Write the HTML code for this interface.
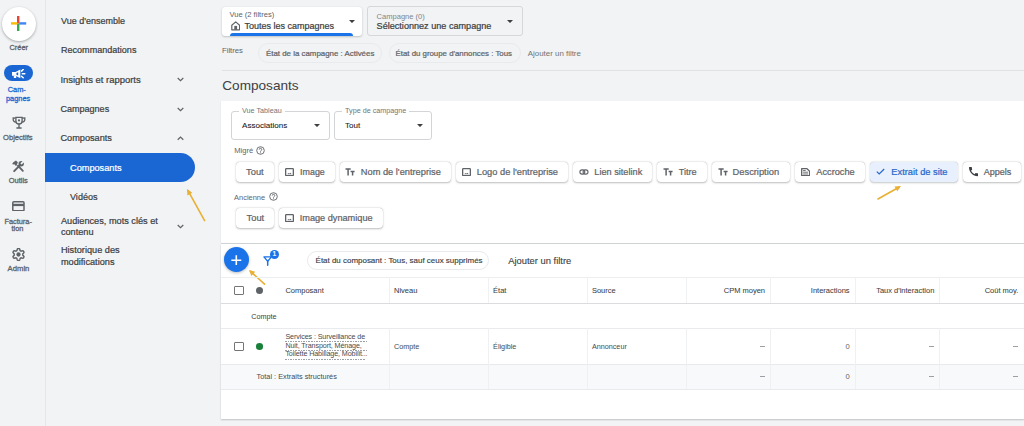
<!DOCTYPE html>
<html><head><meta charset="utf-8"><style>
html,body{margin:0;padding:0;background:#f1f3f4}
body{width:1024px;height:426px;overflow:hidden;position:relative;background:#f1f3f4;font-family:"Liberation Sans",sans-serif}
.a{position:absolute}
.t{position:absolute;white-space:nowrap}
</style></head><body>
<div class="a" style="left:45px;top:0px;width:1px;height:426px;background:#e4e6e8"></div>
<div class="a" style="left:1.5px;top:6.8px;width:34px;height:34px;border-radius:50%;background:#fff;box-shadow:0 1px 3px rgba(60,64,67,.3),0 1px 2px rgba(60,64,67,.15)"></div>
<svg class="a" style="left:10px;top:15px" width="17" height="17" viewBox="0 0 17 17"><rect x="7" y="1" width="2.4" height="7.5" fill="#ea4335"/><rect x="9.2" y="7.2" width="7" height="2.4" fill="#4285f4"/><rect x="7" y="8.6" width="2.4" height="7.4" fill="#34a853"/><rect x="1" y="7.2" width="6.4" height="2.4" fill="#fbbc04"/></svg>
<div class="t" style="left:9.50px;top:43.74px;font-size:7.40px;line-height:7.40px;color:#5f6368;-webkit-text-stroke:0.3px #5f6368;">Créer</div>
<div class="a" style="left:4px;top:65px;width:29px;height:15.5px;border-radius:8px;background:#1a66d2"></div>
<svg class="a" style="left:12px;top:69px" width="14" height="10" viewBox="0 0 14 10"><path d="M0 2.9h3.6L8.3 0.5v8.7L3.6 6.7H0z" fill="#fff"/><path d="M4.4 3.9L6.2 3.3v3.1L4.4 5.8z" fill="#1a66d2"/><path d="M1.7 6.5h2.5L4.2 9H1.9z" fill="#fff"/><path d="M9.5 2.1l1.7-1.6M10.3 4.7h2.5M9.5 7.2l1.7 1.6" stroke="#fff" stroke-width="1.5" stroke-linecap="round"/></svg>
<div class="t" style="left:7.70px;top:85.74px;font-size:7.40px;line-height:7.40px;color:#1a66d2;-webkit-text-stroke:0.3px #1a66d2;">Cam-</div>
<div class="t" style="left:6.00px;top:95.04px;font-size:7.40px;line-height:7.40px;color:#1a66d2;-webkit-text-stroke:0.3px #1a66d2;">pagnes</div>
<svg class="a" style="left:11.5px;top:115.5px" width="14" height="13.5" viewBox="0 0 14 13.5"><path d="M3.9 1.3h6.2v3.6a3.1 3.1 0 0 1-6.2 0z" fill="none" stroke="#5f6368" stroke-width="1.35"/><path d="M3.8 2.2L1.2 1.9v1.5c0 1.3 1.1 2.5 2.8 2.7M10.2 2.2l2.6-.3v1.5c0 1.3-1.1 2.5-2.8 2.7" fill="none" stroke="#5f6368" stroke-width="1.3"/><path d="M7 8v3.4M4.4 12h5.2" stroke="#5f6368" stroke-width="1.35"/><circle cx="7" cy="4.4" r="1.1" fill="#5f6368"/></svg>
<div class="t" style="left:3.00px;top:133.77px;font-size:7.60px;line-height:7.60px;color:#5f6368;-webkit-text-stroke:0.3px #5f6368;">Objectifs</div>
<svg class="a" style="left:12px;top:159.5px" width="13" height="13" viewBox="0 0 24 24"><path d="M4 20.5L14.5 10" stroke="#5f6368" stroke-width="3.6" stroke-linecap="round"/><circle cx="17" cy="7" r="5" fill="#5f6368"/><path d="M17.6 6.4L22 2" stroke="#f1f3f4" stroke-width="3.4" stroke-linecap="round"/><path d="M11 10.5L20 20" stroke="#5f6368" stroke-width="3.4" stroke-linecap="round"/><path d="M10.8 4.2L7.3 0.7 3 3.5 0.6 6.6 1.8 8.6 3.7 7.6 7.8 11.6z" fill="#5f6368"/></svg>
<div class="t" style="left:8.70px;top:177.45px;font-size:7.50px;line-height:7.50px;color:#5f6368;-webkit-text-stroke:0.3px #5f6368;">Outils</div>
<svg class="a" style="left:12px;top:200.5px" width="13" height="10.5" viewBox="0 0 13 10.5"><rect x="0.8" y="0.8" width="11.2" height="8.9" rx="1" fill="none" stroke="#5f6368" stroke-width="1.5"/><rect x="0.8" y="2.8" width="11.2" height="2.3" fill="#5f6368"/></svg>
<div class="t" style="left:4.40px;top:217.64px;font-size:7.40px;line-height:7.40px;color:#5f6368;-webkit-text-stroke:0.3px #5f6368;">Factura-</div>
<div class="t" style="left:11.50px;top:225.34px;font-size:7.40px;line-height:7.40px;color:#5f6368;-webkit-text-stroke:0.3px #5f6368;">tion</div>
<svg class="a" style="left:11.8px;top:247.5px" width="13" height="13" viewBox="0 0 12.8 12.8"><path d="M10.55 6.40 L10.55 6.51 L10.54 6.62 L10.54 6.73 L10.53 6.83 L10.51 6.94 L10.60 7.06 L10.75 7.21 L10.91 7.36 L11.07 7.52 L11.23 7.69 L11.39 7.88 L11.53 8.07 L11.66 8.26 L11.77 8.46 L11.80 8.64 L11.74 8.78 L11.68 8.92 L11.61 9.06 L11.54 9.19 L11.47 9.32 L11.39 9.46 L11.31 9.59 L11.22 9.71 L11.13 9.84 L11.04 9.96 L10.87 10.02 L10.64 10.02 L10.41 10.01 L10.17 9.98 L9.94 9.94 L9.70 9.88 L9.48 9.82 L9.27 9.76 L9.07 9.70 L8.93 9.69 L8.84 9.76 L8.75 9.82 L8.66 9.88 L8.57 9.94 L8.48 9.99 L8.38 10.05 L8.28 10.10 L8.19 10.15 L8.09 10.19 L7.99 10.23 L7.92 10.37 L7.88 10.57 L7.82 10.78 L7.76 11.00 L7.69 11.23 L7.61 11.46 L7.52 11.68 L7.42 11.89 L7.30 12.08 L7.16 12.20 L7.01 12.22 L6.86 12.23 L6.71 12.24 L6.55 12.25 L6.40 12.25 L6.25 12.25 L6.09 12.24 L5.94 12.23 L5.79 12.22 L5.64 12.20 L5.50 12.08 L5.38 11.89 L5.28 11.68 L5.19 11.46 L5.11 11.23 L5.04 11.00 L4.98 10.78 L4.92 10.57 L4.88 10.37 L4.81 10.23 L4.71 10.19 L4.61 10.15 L4.52 10.10 L4.42 10.05 L4.33 9.99 L4.23 9.94 L4.14 9.88 L4.05 9.82 L3.96 9.76 L3.87 9.69 L3.73 9.70 L3.53 9.76 L3.32 9.82 L3.10 9.88 L2.86 9.94 L2.63 9.98 L2.39 10.01 L2.16 10.02 L1.93 10.02 L1.76 9.96 L1.67 9.84 L1.58 9.71 L1.49 9.59 L1.41 9.46 L1.33 9.32 L1.26 9.19 L1.19 9.06 L1.12 8.92 L1.06 8.78 L1.00 8.64 L1.03 8.46 L1.14 8.26 L1.27 8.07 L1.41 7.88 L1.57 7.69 L1.73 7.52 L1.89 7.36 L2.05 7.21 L2.20 7.06 L2.29 6.94 L2.27 6.83 L2.26 6.73 L2.26 6.62 L2.25 6.51 L2.25 6.40 L2.25 6.29 L2.26 6.18 L2.26 6.07 L2.27 5.97 L2.29 5.86 L2.20 5.74 L2.05 5.59 L1.89 5.44 L1.73 5.28 L1.57 5.11 L1.41 4.92 L1.27 4.73 L1.14 4.54 L1.03 4.34 L1.00 4.16 L1.06 4.02 L1.12 3.88 L1.19 3.74 L1.26 3.61 L1.33 3.48 L1.41 3.34 L1.49 3.21 L1.58 3.09 L1.67 2.96 L1.76 2.84 L1.93 2.78 L2.16 2.78 L2.39 2.79 L2.63 2.82 L2.86 2.86 L3.10 2.92 L3.32 2.98 L3.53 3.04 L3.73 3.10 L3.87 3.11 L3.96 3.04 L4.05 2.98 L4.14 2.92 L4.23 2.86 L4.32 2.81 L4.42 2.75 L4.52 2.70 L4.61 2.65 L4.71 2.61 L4.81 2.57 L4.88 2.43 L4.92 2.23 L4.98 2.02 L5.04 1.80 L5.11 1.57 L5.19 1.34 L5.28 1.12 L5.38 0.91 L5.50 0.72 L5.64 0.60 L5.79 0.58 L5.94 0.57 L6.09 0.56 L6.25 0.55 L6.40 0.55 L6.55 0.55 L6.71 0.56 L6.86 0.57 L7.01 0.58 L7.16 0.60 L7.30 0.72 L7.42 0.91 L7.52 1.12 L7.61 1.34 L7.69 1.57 L7.76 1.80 L7.82 2.02 L7.88 2.23 L7.92 2.43 L7.99 2.57 L8.09 2.61 L8.19 2.65 L8.28 2.70 L8.38 2.75 L8.48 2.81 L8.57 2.86 L8.66 2.92 L8.75 2.98 L8.84 3.04 L8.93 3.11 L9.07 3.10 L9.27 3.04 L9.48 2.98 L9.70 2.92 L9.94 2.86 L10.17 2.82 L10.41 2.79 L10.64 2.78 L10.87 2.78 L11.04 2.84 L11.13 2.96 L11.22 3.09 L11.31 3.21 L11.39 3.34 L11.47 3.48 L11.54 3.61 L11.61 3.74 L11.68 3.88 L11.74 4.02 L11.80 4.16 L11.77 4.34 L11.66 4.54 L11.53 4.73 L11.39 4.92 L11.23 5.11 L11.07 5.28 L10.91 5.44 L10.75 5.59 L10.60 5.74 L10.51 5.86 L10.53 5.97 L10.54 6.07 L10.54 6.18 L10.55 6.29 L10.55 6.40z" fill="none" stroke="#5f6368" stroke-width="1.45" stroke-linejoin="round"/><circle cx="6.4" cy="6.4" r="2.1" fill="#5f6368"/></svg>
<div class="t" style="left:7.60px;top:265.18px;font-size:7.70px;line-height:7.70px;color:#5f6368;-webkit-text-stroke:0.3px #5f6368;">Admin</div>
<div class="t" style="left:61.00px;top:16.98px;font-size:9.00px;line-height:9.00px;color:#3c4043;-webkit-text-stroke:0.22px #3c4043;">Vue d'ensemble</div>
<div class="t" style="left:61.00px;top:46.14px;font-size:9.05px;line-height:9.05px;color:#3c4043;-webkit-text-stroke:0.22px #3c4043;">Recommandations</div>
<div class="t" style="left:60.40px;top:75.40px;font-size:9.45px;line-height:9.45px;color:#3c4043;-webkit-text-stroke:0.22px #3c4043;">Insights et rapports</div>
<svg class="a" style="left:177px;top:77px" width="7" height="5" viewBox="0 0 7 5"><path d="M0.7 1L3.5 3.7 6.3 1" fill="none" stroke="#5f6368" stroke-width="1.2"/></svg>
<div class="t" style="left:60.40px;top:105.04px;font-size:9.05px;line-height:9.05px;color:#3c4043;-webkit-text-stroke:0.22px #3c4043;">Campagnes</div>
<svg class="a" style="left:177px;top:106.5px" width="7" height="5" viewBox="0 0 7 5"><path d="M0.7 1L3.5 3.7 6.3 1" fill="none" stroke="#5f6368" stroke-width="1.2"/></svg>
<div class="t" style="left:60.40px;top:134.41px;font-size:9.20px;line-height:9.20px;color:#3c4043;-webkit-text-stroke:0.22px #3c4043;">Composants</div>
<svg class="a" style="left:177px;top:135.5px" width="7" height="5" viewBox="0 0 7 5"><path d="M0.7 3.7L3.5 1 6.3 3.7" fill="none" stroke="#5f6368" stroke-width="1.2"/></svg>
<div class="a" style="left:45px;top:153px;width:150px;height:29.3px;background:#1a67d4;border-radius:0 14.6px 14.6px 0"></div>
<div class="t" style="left:70.00px;top:163.71px;font-size:9.20px;line-height:9.20px;color:#fff;-webkit-text-stroke:0.22px #fff;">Composants</div>
<div class="t" style="left:70.00px;top:193.24px;font-size:9.05px;line-height:9.05px;color:#3c4043;-webkit-text-stroke:0.22px #3c4043;">Vidéos</div>
<div class="t" style="left:60.90px;top:216.51px;font-size:9.20px;line-height:9.20px;color:#3c4043;-webkit-text-stroke:0.22px #3c4043;">Audiences, mots clés et</div>
<div class="t" style="left:60.90px;top:228.21px;font-size:9.20px;line-height:9.20px;color:#3c4043;-webkit-text-stroke:0.22px #3c4043;">contenu</div>
<svg class="a" style="left:177px;top:224px" width="7" height="5" viewBox="0 0 7 5"><path d="M0.7 1L3.5 3.7 6.3 1" fill="none" stroke="#5f6368" stroke-width="1.2"/></svg>
<div class="t" style="left:60.90px;top:245.81px;font-size:9.20px;line-height:9.20px;color:#3c4043;-webkit-text-stroke:0.22px #3c4043;">Historique des</div>
<div class="t" style="left:60.90px;top:257.51px;font-size:9.20px;line-height:9.20px;color:#3c4043;-webkit-text-stroke:0.22px #3c4043;">modifications</div>
<svg class="a" style="left:179.3px;top:181.4px" width="33.6" height="47.6"><line x1="25.6" y1="39.6" x2="9.0" y2="9.7" stroke="#e8b034" stroke-width="1.6" stroke-linecap="round"/><path d="M8.0 8.0L13.3 11.7L8.4 14.5z" fill="#e8b034"/></svg>
<div class="a" style="left:222px;top:7px;width:140px;height:29px;background:#fff;border-radius:3px;box-shadow:0 1px 2px rgba(60,64,67,.25),0 0 1px rgba(60,64,67,.15)"></div>
<div class="t" style="left:229.40px;top:11.07px;font-size:7.60px;line-height:7.60px;color:#5f6368;">Vue (2 filtres)</div>
<svg class="a" style="left:230.8px;top:21.3px" width="9.4" height="9.6" viewBox="0 0 9.4 9.6"><path d="M0.8 4.2L4.7 0.9l3.9 3.3v4.6H0.8z" fill="none" stroke="#5f6368" stroke-width="1.2" stroke-linejoin="round"/><rect x="3.3" y="4.9" width="2.8" height="3.9" fill="#5f6368"/></svg>
<div class="t" style="left:244.40px;top:21.78px;font-size:9.00px;line-height:9.00px;color:#3c4043;-webkit-text-stroke:0.22px #3c4043;">Toutes les campagnes</div>
<svg class="a" style="left:349px;top:19.6px" width="6" height="3.2" viewBox="0 0 6 3.2"><path d="M0 0h6L3 3.1z" fill="#3c4043"/></svg>
<div class="a" style="left:229.8px;top:33px;width:123px;height:3px;background:#1a73e8;border-radius:3px 3px 0 0"></div>
<div class="a" style="left:366.5px;top:6.3px;width:156px;height:29.4px;border:1px solid #d5d7da;border-radius:3px;box-sizing:border-box"></div>
<div class="t" style="left:376.60px;top:12.51px;font-size:7.55px;line-height:7.55px;color:#80868b;">Campagne (0)</div>
<div class="t" style="left:376.60px;top:22.10px;font-size:9.10px;line-height:9.10px;color:#3c4043;-webkit-text-stroke:0.22px #3c4043;">Sélectionnez une campagne</div>
<svg class="a" style="left:506.8px;top:20px" width="6" height="3.2" viewBox="0 0 6 3.2"><path d="M0 0h6L3 3.1z" fill="#3c4043"/></svg>
<div class="t" style="left:222.00px;top:47.28px;font-size:7.70px;line-height:7.70px;color:#5f6368;">Filtres</div>
<div class="a" style="left:258px;top:43.3px;width:124px;height:19.3px;border:1px solid #e8eaed;border-radius:10px;box-sizing:border-box"></div>
<div class="t" style="left:266.00px;top:50.01px;font-size:7.90px;line-height:7.90px;color:#5f6368;-webkit-text-stroke:0.22px #5f6368;">État de la campagne : Activées</div>
<div class="a" style="left:388.6px;top:42.7px;width:132px;height:20px;border:1px solid #e8eaed;border-radius:10px;box-sizing:border-box"></div>
<div class="t" style="left:395.50px;top:50.05px;font-size:7.85px;line-height:7.85px;color:#5f6368;-webkit-text-stroke:0.22px #5f6368;">État du groupe d'annonces : Tous</div>
<div class="t" style="left:527.80px;top:49.91px;font-size:7.90px;line-height:7.90px;color:#6f7377;">Ajouter un filtre</div>
<div class="a" style="left:222px;top:70px;width:802px;height:1px;background:#dfe1e5"></div>
<div class="t" style="left:222.30px;top:78.99px;font-size:13.60px;line-height:13.60px;color:#3c4043;">Composants</div>
<div class="a" style="left:221px;top:101px;width:803px;height:142px;background:#fff;box-shadow:0 1px 1px rgba(60,64,67,.18)"></div>
<div class="a" style="left:231px;top:110.6px;width:98.5px;height:29.4px;border:1px solid #d2d4d7;border-radius:3px;box-sizing:border-box"></div><div class="a" style="left:239.1px;top:108.6px;width:45.8px;height:4px;background:#fff"></div><div class="t" style="left:242.10px;top:106.81px;font-size:7.20px;line-height:7.20px;color:#70757a;">Vue Tableau</div><div class="t" style="left:242.10px;top:121.89px;font-size:8.05px;line-height:8.05px;color:#202124;-webkit-text-stroke:0.08px #202124;">Associations</div><svg class="a" style="left:313.8px;top:124.2px" width="6" height="3.2" viewBox="0 0 6 3.2"><path d="M0 0h6L3 3.1z" fill="#3c4043"/></svg>
<div class="a" style="left:334px;top:110.6px;width:97.5px;height:29.4px;border:1px solid #d2d4d7;border-radius:3px;box-sizing:border-box"></div><div class="a" style="left:342.1px;top:108.6px;width:67.1px;height:4px;background:#fff"></div><div class="t" style="left:345.10px;top:106.81px;font-size:7.20px;line-height:7.20px;color:#70757a;">Type de campagne</div><div class="t" style="left:345.10px;top:121.93px;font-size:8.00px;line-height:8.00px;color:#202124;-webkit-text-stroke:0.08px #202124;">Tout</div><svg class="a" style="left:416.8px;top:124.2px" width="6" height="3.2" viewBox="0 0 6 3.2"><path d="M0 0h6L3 3.1z" fill="#3c4043"/></svg>
<div class="t" style="left:234.20px;top:147.07px;font-size:7.60px;line-height:7.60px;color:#5f6368;">Migré</div>
<svg class="a" style="left:256.2px;top:145.6px" width="9" height="9" viewBox="0 0 9 9"><circle cx="4.5" cy="4.5" r="3.8" fill="none" stroke="#5f6368" stroke-width="0.9"/><path d="M3.2 3.6a1.3 1.3 0 1 1 1.9 1.1c-.5.3-.6.5-.6 1" fill="none" stroke="#5f6368" stroke-width="0.9"/><circle cx="4.5" cy="6.8" r=".5" fill="#5f6368"/></svg>
<div class="t" style="left:234.10px;top:193.69px;font-size:7.45px;line-height:7.45px;color:#5f6368;">Ancienne</div>
<svg class="a" style="left:268.6px;top:192.4px" width="9" height="9" viewBox="0 0 9 9"><circle cx="4.5" cy="4.5" r="3.8" fill="none" stroke="#5f6368" stroke-width="0.9"/><path d="M3.2 3.6a1.3 1.3 0 1 1 1.9 1.1c-.5.3-.6.5-.6 1" fill="none" stroke="#5f6368" stroke-width="0.9"/><circle cx="4.5" cy="6.8" r=".5" fill="#5f6368"/></svg>
<div class="a" style="left:235.6px;top:162.3px;width:38.7px;height:19.5px;background:#fff;border-radius:4px;box-shadow:0 0.5px 2px rgba(60,64,67,.35),0 0 0.5px rgba(60,64,67,.3)"></div>
<div class="t" style="left:246.10px;top:167.73px;font-size:9.30px;line-height:9.30px;color:#5f6368;-webkit-text-stroke:0.22px #5f6368;">Tout</div>
<div class="a" style="left:278.8px;top:162.3px;width:56.6px;height:19.5px;background:#fff;border-radius:4px;box-shadow:0 0.5px 2px rgba(60,64,67,.35),0 0 0.5px rgba(60,64,67,.3)"></div>
<svg class="a" style="left:285.2px;top:167.9px" width="9" height="8.4" viewBox="0 0 9 8.4"><rect x="0.65" y="0.65" width="7.7" height="7.1" rx="0.7" fill="none" stroke="#5f6368" stroke-width="1.3"/><path d="M2.2 6.2l1.2-1.3 0.9 0.9 1-1.1 1.5 1.5z" fill="#5f6368"/></svg>
<div class="t" style="left:300.10px;top:168.07px;font-size:8.90px;line-height:8.90px;color:#5f6368;-webkit-text-stroke:0.22px #5f6368;">Image</div>
<div class="a" style="left:339.7px;top:162.3px;width:111.3px;height:19.5px;background:#fff;border-radius:4px;box-shadow:0 0.5px 2px rgba(60,64,67,.35),0 0 0.5px rgba(60,64,67,.3)"></div>
<svg class="a" style="left:345.3px;top:168px" width="10" height="8" viewBox="0 0 10 8"><path d="M0.5 1.1h5.2M3.1 1.1v6.4M5.6 3.6h4M7.6 3.6v3.9" fill="none" stroke="#5f6368" stroke-width="1.5"/></svg>
<div class="t" style="left:360.80px;top:167.74px;font-size:9.28px;line-height:9.28px;color:#5f6368;-webkit-text-stroke:0.22px #5f6368;">Nom de l'entreprise</div>
<div class="a" style="left:455.7px;top:162.3px;width:112.5px;height:19.5px;background:#fff;border-radius:4px;box-shadow:0 0.5px 2px rgba(60,64,67,.35),0 0 0.5px rgba(60,64,67,.3)"></div>
<svg class="a" style="left:462.4px;top:167.9px" width="9" height="8.4" viewBox="0 0 9 8.4"><rect x="0.65" y="0.65" width="7.7" height="7.1" rx="0.7" fill="none" stroke="#5f6368" stroke-width="1.3"/><path d="M2.2 6.2l1.2-1.3 0.9 0.9 1-1.1 1.5 1.5z" fill="#5f6368"/></svg>
<div class="t" style="left:476.80px;top:167.74px;font-size:9.29px;line-height:9.29px;color:#5f6368;-webkit-text-stroke:0.22px #5f6368;">Logo de l'entreprise</div>
<div class="a" style="left:573.2px;top:162.3px;width:79.0px;height:19.5px;background:#fff;border-radius:4px;box-shadow:0 0.5px 2px rgba(60,64,67,.35),0 0 0.5px rgba(60,64,67,.3)"></div>
<svg class="a" style="left:578.8px;top:169px" width="10" height="6" viewBox="0 0 10 6"><rect x="0.9" y="0.9" width="4.9" height="4.2" rx="2.1" fill="none" stroke="#5f6368" stroke-width="1.1"/><rect x="4.1" y="0.9" width="4.9" height="4.2" rx="2.1" fill="none" stroke="#5f6368" stroke-width="1.1"/></svg>
<div class="t" style="left:594.30px;top:167.83px;font-size:9.18px;line-height:9.18px;color:#5f6368;-webkit-text-stroke:0.22px #5f6368;">Lien sitelink</div>
<div class="a" style="left:656.9px;top:162.3px;width:49.9px;height:19.5px;background:#fff;border-radius:4px;box-shadow:0 0.5px 2px rgba(60,64,67,.35),0 0 0.5px rgba(60,64,67,.3)"></div>
<svg class="a" style="left:662.8px;top:168px" width="10" height="8" viewBox="0 0 10 8"><path d="M0.5 1.1h5.2M3.1 1.1v6.4M5.6 3.6h4M7.6 3.6v3.9" fill="none" stroke="#5f6368" stroke-width="1.5"/></svg>
<div class="t" style="left:678.70px;top:167.83px;font-size:9.18px;line-height:9.18px;color:#5f6368;-webkit-text-stroke:0.22px #5f6368;">Titre</div>
<div class="a" style="left:711.5px;top:162.3px;width:78.5px;height:19.5px;background:#fff;border-radius:4px;box-shadow:0 0.5px 2px rgba(60,64,67,.35),0 0 0.5px rgba(60,64,67,.3)"></div>
<svg class="a" style="left:717.6px;top:168px" width="10" height="8" viewBox="0 0 10 8"><path d="M0.5 1.1h5.2M3.1 1.1v6.4M5.6 3.6h4M7.6 3.6v3.9" fill="none" stroke="#5f6368" stroke-width="1.5"/></svg>
<div class="t" style="left:732.60px;top:167.73px;font-size:9.30px;line-height:9.30px;color:#5f6368;-webkit-text-stroke:0.22px #5f6368;">Description</div>
<div class="a" style="left:795.2px;top:162.3px;width:69.7px;height:19.5px;background:#fff;border-radius:4px;box-shadow:0 0.5px 2px rgba(60,64,67,.35),0 0 0.5px rgba(60,64,67,.3)"></div>
<svg class="a" style="left:800.8px;top:167.8px" width="9.4" height="8.4" viewBox="0 0 9.4 8.4"><path d="M0.7 0.7h5.3l2.7 2.6v4.4H0.7z" fill="none" stroke="#5f6368" stroke-width="1.3" stroke-linejoin="round"/><path d="M2.1 2.5h2.6M2.1 4.2h5.1M2.1 6h5.1" stroke="#5f6368" stroke-width="0.9"/></svg>
<div class="t" style="left:816.30px;top:167.79px;font-size:9.23px;line-height:9.23px;color:#5f6368;-webkit-text-stroke:0.22px #5f6368;">Accroche</div>
<div class="a" style="left:870.2px;top:162.3px;width:87.7px;height:19.5px;background:#e8f0fe;border-radius:4px;box-shadow:0 0.5px 2px rgba(60,64,67,.3),0 0 0.5px rgba(60,64,67,.25)"></div>
<svg class="a" style="left:876.2px;top:168.3px" width="9" height="7" viewBox="0 0 9 7"><path d="M0.8 3.6l2.4 2.4L8.2 1" fill="none" stroke="#2767c9" stroke-width="1.2"/></svg>
<div class="t" style="left:891.30px;top:167.74px;font-size:9.29px;line-height:9.29px;color:#2767c9;-webkit-text-stroke:0.22px #2767c9;">Extrait de site</div>
<div class="a" style="left:962.6px;top:162.3px;width:58.6px;height:19.5px;background:#fff;border-radius:4px;box-shadow:0 0.5px 2px rgba(60,64,67,.35),0 0 0.5px rgba(60,64,67,.3)"></div>
<svg class="a" style="left:968.6px;top:167.4px" width="9.2" height="9.2" viewBox="3 3 18 18"><path fill="#3c4043" d="M20.01 15.38c-1.23 0-2.42-.2-3.53-.56a.977.977 0 0 0-1.01.24l-1.57 1.97c-2.83-1.35-5.48-3.9-6.89-6.83l1.95-1.66c.27-.28.35-.67.24-1.02-.37-1.11-.56-2.3-.56-3.53 0-.54-.45-.99-.99-.99H4.19C3.65 3 3 3.24 3 3.99 3 13.28 10.73 21 20.01 21c.71 0 .99-.63.99-1.18v-3.45c0-.54-.45-.99-.99-.99z"/></svg>
<div class="t" style="left:983.70px;top:167.96px;font-size:9.02px;line-height:9.02px;color:#5f6368;-webkit-text-stroke:0.22px #5f6368;">Appels</div>
<svg class="a" style="left:870.2px;top:178.2px" width="39.0" height="29.0"><line x1="8.0" y1="21.0" x2="29.3" y2="9.0" stroke="#e8b034" stroke-width="1.6" stroke-linecap="round"/><path d="M31.0 8.0L27.3 13.3L24.5 8.4z" fill="#e8b034"/></svg>
<div class="a" style="left:235.8px;top:208.2px;width:38.7px;height:20.0px;background:#fff;border-radius:4px;box-shadow:0 0.5px 2px rgba(60,64,67,.35),0 0 0.5px rgba(60,64,67,.3)"></div>
<div class="t" style="left:246.60px;top:213.73px;font-size:9.30px;line-height:9.30px;color:#5f6368;-webkit-text-stroke:0.22px #5f6368;">Tout</div>
<div class="a" style="left:278.5px;top:208.2px;width:104.5px;height:20.0px;background:#fff;border-radius:4px;box-shadow:0 0.5px 2px rgba(60,64,67,.35),0 0 0.5px rgba(60,64,67,.3)"></div>
<svg class="a" style="left:285.1px;top:214px" width="9" height="8.4" viewBox="0 0 9 8.4"><rect x="0.65" y="0.65" width="7.7" height="7.1" rx="0.7" fill="none" stroke="#5f6368" stroke-width="1.3"/><path d="M2.2 6.2l1.2-1.3 0.9 0.9 1-1.1 1.5 1.5z" fill="#5f6368"/></svg>
<div class="t" style="left:299.70px;top:213.83px;font-size:9.18px;line-height:9.18px;color:#5f6368;-webkit-text-stroke:0.22px #5f6368;">Image dynamique</div>
<div class="a" style="left:221px;top:244px;width:803px;height:175px;background:#fff;box-shadow:0 1px 1.5px rgba(60,64,67,.28)"></div>
<div class="a" style="left:224px;top:247.3px;width:25px;height:25px;border-radius:50%;background:#1a73e8;box-shadow:0 1px 3px rgba(60,64,67,.35)"></div>
<svg class="a" style="left:231.4px;top:254.6px" width="10.6" height="10.6" viewBox="0 0 10.6 10.6"><path d="M5.3 0.3v10M0.3 5.3h10" stroke="#fff" stroke-width="1.6"/></svg>
<svg class="a" style="left:263px;top:255.5px" width="10" height="10" viewBox="0 0 10 10"><path d="M0.9 0.9h7.6L4.7 5.2z" fill="none" stroke="#1a73e8" stroke-width="1.3" stroke-linejoin="round"/><path d="M4.7 5v4.2" stroke="#1a73e8" stroke-width="1.5" stroke-linecap="round"/></svg>
<div class="a" style="left:269.9px;top:249.5px;width:9px;height:9px;border-radius:50%;background:#1a73e8"></div>
<div class="t" style="left:272.40px;top:251.44px;font-size:6.80px;line-height:6.80px;color:#fff;-webkit-text-stroke:0.22px #fff;">1</div>
<svg class="a" style="left:241.2px;top:261.9px" width="31.5" height="30.1"><line x1="23.5" y1="22.1" x2="9.5" y2="9.3" stroke="#e8b034" stroke-width="1.6" stroke-linecap="round"/><path d="M8.0 8.0L14.2 9.8L10.4 14.0z" fill="#e8b034"/></svg>
<div class="a" style="left:307.1px;top:251.2px;width:182px;height:18.7px;border:1px solid #e8eaed;border-radius:9.5px;box-sizing:border-box"></div>
<div class="t" style="left:315.60px;top:256.96px;font-size:7.96px;line-height:7.96px;color:#3c4043;-webkit-text-stroke:0.15px #3c4043;">État du composant : Tous, sauf ceux supprimés</div>
<div class="t" style="left:508.20px;top:256.86px;font-size:9.38px;line-height:9.38px;color:#3c4043;-webkit-text-stroke:0.12px #3c4043;">Ajouter un filtre</div>
<div class="a" style="left:221px;top:277px;width:803px;height:1px;background:#eceef0"></div>
<div class="a" style="left:221px;top:303px;width:803px;height:1.2px;background:#dadce0"></div>
<div class="a" style="left:221px;top:328px;width:803px;height:1px;background:#e8eaed"></div>
<div class="a" style="left:221px;top:364px;width:803px;height:25px;background:#f8f9fa"></div>
<div class="a" style="left:221px;top:364px;width:803px;height:1px;background:#e8eaed"></div>
<div class="a" style="left:221px;top:388.6px;width:803px;height:1px;background:#e8eaed"></div>
<div class="a" style="left:388.75px;top:277px;width:1px;height:26px;background:#f0f1f3"></div>
<div class="a" style="left:388.75px;top:328px;width:1px;height:61px;background:#eef0f2"></div>
<div class="a" style="left:487.8px;top:277px;width:1px;height:26px;background:#f0f1f3"></div>
<div class="a" style="left:487.8px;top:328px;width:1px;height:61px;background:#eef0f2"></div>
<div class="a" style="left:586.9px;top:277px;width:1px;height:26px;background:#f0f1f3"></div>
<div class="a" style="left:586.9px;top:328px;width:1px;height:61px;background:#eef0f2"></div>
<div class="a" style="left:686px;top:277px;width:1px;height:26px;background:#f0f1f3"></div>
<div class="a" style="left:686px;top:328px;width:1px;height:61px;background:#eef0f2"></div>
<div class="a" style="left:770px;top:277px;width:1px;height:26px;background:#f0f1f3"></div>
<div class="a" style="left:770px;top:328px;width:1px;height:61px;background:#eef0f2"></div>
<div class="a" style="left:854.7px;top:277px;width:1px;height:26px;background:#f0f1f3"></div>
<div class="a" style="left:854.7px;top:328px;width:1px;height:61px;background:#eef0f2"></div>
<div class="a" style="left:939.3px;top:277px;width:1px;height:26px;background:#f0f1f3"></div>
<div class="a" style="left:939.3px;top:328px;width:1px;height:61px;background:#eef0f2"></div>
<div class="a" style="left:234px;top:286px;width:9.7px;height:9.3px;border:1.6px solid #757575;border-radius:1px;box-sizing:border-box"></div>
<div class="a" style="left:256px;top:287.3px;width:7px;height:7px;border-radius:50%;background:#5f6368"></div>
<div class="t" style="left:285.40px;top:286.75px;font-size:7.50px;line-height:7.50px;color:#3c4043;-webkit-text-stroke:0.05px #3c4043;">Composant</div>
<div class="t" style="left:394.00px;top:286.75px;font-size:7.50px;line-height:7.50px;color:#3c4043;-webkit-text-stroke:0.05px #3c4043;">Niveau</div>
<div class="t" style="left:493.10px;top:286.75px;font-size:7.50px;line-height:7.50px;color:#3c4043;-webkit-text-stroke:0.05px #3c4043;">État</div>
<div class="t" style="left:591.90px;top:286.75px;font-size:7.50px;line-height:7.50px;color:#3c4043;-webkit-text-stroke:0.05px #3c4043;">Source</div>
<div class="t" style="right:259.00px;top:286.75px;font-size:7.50px;line-height:7.50px;color:#3c4043;-webkit-text-stroke:0.05px #3c4043;">CPM moyen</div>
<div class="t" style="right:174.40px;top:286.75px;font-size:7.50px;line-height:7.50px;color:#3c4043;-webkit-text-stroke:0.05px #3c4043;">Interactions</div>
<div class="t" style="right:89.70px;top:286.75px;font-size:7.50px;line-height:7.50px;color:#3c4043;-webkit-text-stroke:0.05px #3c4043;">Taux d'interaction</div>
<div class="t" style="right:5.70px;top:286.75px;font-size:7.50px;line-height:7.50px;color:#3c4043;-webkit-text-stroke:0.05px #3c4043;">Coût moy.</div>
<div class="t" style="left:251.30px;top:312.88px;font-size:7.23px;line-height:7.23px;color:#3c4043;">Compte</div>
<div class="a" style="left:234px;top:342.2px;width:9.7px;height:9.3px;border:1.6px solid #757575;border-radius:1px;box-sizing:border-box"></div>
<div class="a" style="left:255.7px;top:343.1px;width:7.4px;height:7px;border-radius:50%;background:#188038"></div>
<div class="t" style="left:285.40px;top:333.94px;font-size:7.16px;line-height:7.16px;color:#474b4f;letter-spacing:-0.1px">Services : Surveillance de</div>
<div class="a" style="left:285.4px;top:341.4px;width:82.3px;height:0.8px;background:repeating-linear-gradient(90deg,#9aa0a6 0 1.6px,transparent 1.6px 2.6px)"></div>
<div class="t" style="left:285.40px;top:342.69px;font-size:7.16px;line-height:7.16px;color:#474b4f;letter-spacing:-0.1px">Nuit, Transport, Ménage,</div>
<div class="a" style="left:285.4px;top:350.15px;width:82.3px;height:0.8px;background:repeating-linear-gradient(90deg,#9aa0a6 0 1.6px,transparent 1.6px 2.6px)"></div>
<div class="t" style="left:285.40px;top:351.44px;font-size:7.16px;line-height:7.16px;color:#474b4f;letter-spacing:-0.1px">Toilette Habillage, Mobilit...</div>
<div class="a" style="left:285.4px;top:358.9px;width:80px;height:0.8px;background:repeating-linear-gradient(90deg,#9aa0a6 0 1.6px,transparent 1.6px 2.6px)"></div>
<div class="t" style="left:394.00px;top:343.28px;font-size:7.23px;line-height:7.23px;color:#474b4f;">Compte</div>
<div class="t" style="left:493.10px;top:343.28px;font-size:7.23px;line-height:7.23px;color:#474b4f;">Éligible</div>
<div class="t" style="left:591.90px;top:343.28px;font-size:7.23px;line-height:7.23px;color:#474b4f;">Annonceur</div>
<div class="a" style="left:759.8px;top:345.6px;width:5.2px;height:0.9px;background:#9aa0a6"></div>
<div class="a" style="left:759.8px;top:376.2px;width:5.2px;height:0.9px;background:#9aa0a6"></div>
<div class="t" style="right:174.40px;top:342.97px;font-size:7.60px;line-height:7.60px;color:#5f6368;">0</div>
<div class="t" style="right:174.40px;top:373.07px;font-size:7.60px;line-height:7.60px;color:#5f6368;">0</div>
<div class="a" style="left:929.0999999999999px;top:345.6px;width:5.2px;height:0.9px;background:#9aa0a6"></div>
<div class="a" style="left:929.0999999999999px;top:376.2px;width:5.2px;height:0.9px;background:#9aa0a6"></div>
<div class="a" style="left:1013.0999999999999px;top:345.6px;width:5.2px;height:0.9px;background:#9aa0a6"></div>
<div class="a" style="left:1013.0999999999999px;top:376.2px;width:5.2px;height:0.9px;background:#9aa0a6"></div>
<div class="t" style="left:256.60px;top:373.30px;font-size:7.33px;line-height:7.33px;color:#474b4f;">Total : Extraits structurés</div>
</body></html>
